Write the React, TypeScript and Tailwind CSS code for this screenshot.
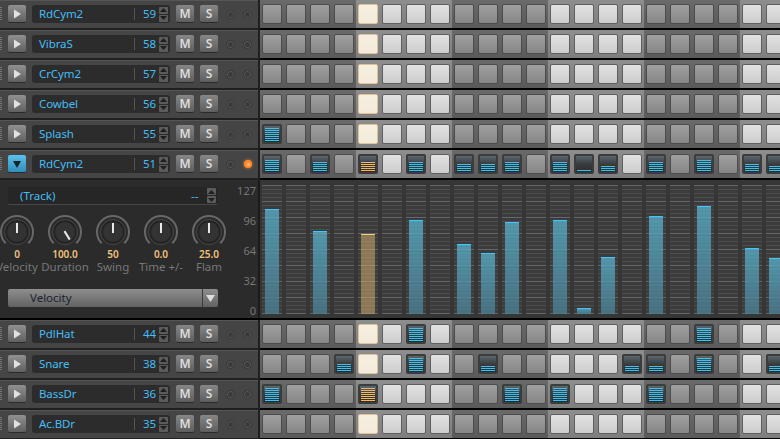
import React from "react";

type Track = { name: string; num: number; steps?: Record<number, number>; orange?: number; open?: boolean };

const top: Track[] = [
  { name: "RdCym2", num: 59 },
  { name: "VibraS", num: 58 },
  { name: "CrCym2", num: 57 },
  { name: "Cowbel", num: 56 },
  { name: "Splash", num: 55, steps: { 0: 7 } },
  {
    name: "RdCym2",
    num: 51,
    open: true,
    orange: 4,
    steps: { 0: 6, 2: 5, 4: 5, 6: 5, 8: 4, 9: 4, 10: 5, 12: 5, 13: 1, 14: 3, 16: 5, 18: 6, 20: 4, 21: 3 },
  },
];
const bottom: Track[] = [
  { name: "PdlHat", num: 44, steps: { 6: 7, 18: 7 } },
  { name: "Snare", num: 38, steps: { 3: 4, 6: 7, 9: 3, 15: 3, 16: 3, 18: 7, 21: 3 } },
  { name: "BassDr", num: 36, orange: 4, steps: { 0: 7, 4: 7, 10: 7, 12: 7, 16: 7 } },
  { name: "Ac.BDr", num: 35 },
];
const cols = Array.from({ length: 22 }, (_, i) => i);
const bars: Record<number, number> = { 0: 105, 2: 83, 4: 80, 6: 94, 8: 70, 9: 61, 10: 92, 12: 94, 13: 6, 14: 57, 16: 98, 18: 108, 20: 66, 21: 56 };

function Spinner() {
  return (
    <div className="flex w-[9px] flex-col gap-[1px]">
      {[0, 1].map((i) => (
        <div key={i} className="flex h-[7px] items-center justify-center rounded-[1px] bg-[#5c5c5c]">
          <svg width="7" height="4" viewBox="0 0 7 4">
            <polygon points={i === 0 ? "3.5,0 7,4 0,4" : "0,0 7,0 3.5,4"} fill="#1f1f1f" />
          </svg>
        </div>
      ))}
    </div>
  );
}

function Led({ on }: { on?: boolean }) {
  return on ? (
    <div className="flex h-[8px] w-[8px] items-center justify-center rounded-full bg-[#ff8a2a] shadow-[0_0_3px_#d9813a]">
      <div className="h-[3px] w-[3px] rounded-full bg-[#ffc070]" />
    </div>
  ) : (
    <div className="flex h-[9px] w-[9px] items-center justify-center rounded-full border border-[#333] bg-[#5a5a5a]">
      <div className="h-[5px] w-[5px] rounded-full bg-[#3a3a3a]" />
    </div>
  );
}

function Strip({ t }: { t: Track }) {
  return (
    <div className="flex h-[28px] w-[258px] items-center bg-[#454545] shadow-[inset_0_1px_0_#555]">
      <div className="h-[14px] w-[2px] bg-[repeating-linear-gradient(180deg,#777_0,#777_1px,transparent_1px,transparent_2px)]" />
      <div
        className={
          t.open
            ? "ml-[6px] flex h-[18px] w-[18px] items-center justify-center rounded-[2px] border-b border-[#2a2a2a] bg-gradient-to-b from-[#5cc1ea] to-[#2d8fbb]"
            : "ml-[6px] flex h-[18px] w-[18px] items-center justify-center rounded-[2px] border-b border-[#2a2a2a] bg-gradient-to-b from-[#909090] to-[#606060]"
        }
      >
        <svg width="10" height="10" viewBox="0 0 10 10">
          {t.open ? <polygon points="1,2 9,2 5,9" fill="#16222a" /> : <polygon points="2,0.5 9,5 2,9.5" fill="#e2e2e2" />}
        </svg>
      </div>
      <div className="ml-[6px] flex h-[18px] w-[138px] items-center rounded-[3px] bg-[#2c2c2c] text-[11.5px] tracking-[-0.1px] text-[#46bdf5]">
        <span className="ml-[7px] w-[95px]">{t.name}</span>
        <div className="h-[12px] w-px bg-[#555]" />
        <span className="ml-[8px] w-[16px]">{t.num}</span>
        <Spinner />
      </div>
      {["M", "S"].map((l) => (
        <div
          key={l}
          className="ml-[6px] flex h-[18px] w-[18px] items-center justify-center rounded-[2px] border-b border-[#2a2a2a] bg-gradient-to-b from-[#868686] to-[#5e5e5e] text-[12px] font-semibold text-[#dcdcdc]"
        >
          {l}
        </div>
      ))}
      <div className="ml-[8px] flex w-[26px] items-center justify-between">
        <Led />
        <Led on={t.open} />
      </div>
    </div>
  );
}

function Pad({ col, level, orange }: { col: number; level?: number; orange?: boolean }) {
  const lightGroup = Math.floor(col / 4) % 2 === 1;
  const accent = col === 4;
  const groupBg = lightGroup
    ? "bg-gradient-to-b from-[#8e8e8e] to-[#7e7e7e]"
    : "bg-gradient-to-b from-[#6a6a6a] to-[#5a5a5a]";
  let pad: React.ReactNode;
  if (level) {
    pad = (
      <div className="flex h-[20px] w-[20px] flex-col justify-end gap-[1px] rounded-[2px] border-2 border-[#3c3c3c] bg-gradient-to-b from-[#5a686f] via-[#383c3f] to-[#2c2c2c] px-[1px] pb-[1px]">
        {Array.from({ length: level }, (_, i) => (
          <div key={i} className={orange ? "h-px w-full bg-[#f5b75c]" : "h-px w-full bg-[#35c3f5]"} />
        ))}
      </div>
    );
  } else {
    const cls = accent
      ? "border-[#e0c498] from-[#f6f0e2] to-[#f3eadb]"
      : lightGroup
        ? "border-[#5f5f5f] from-[#e2e2e2] to-[#cdcdcd]"
        : "border-[#4c4c4c] from-[#a0a0a0] to-[#868686]";
    pad = <div className={"h-[20px] w-[20px] rounded-[2px] border bg-gradient-to-b " + cls} />;
  }
  return <div className={"flex h-[28px] w-[24px] shrink-0 items-center justify-center " + groupBg}>{pad}</div>;
}

function Row({ t }: { t: Track }) {
  return (
    <div className="flex h-[30px] shrink-0 bg-black">
      <div className="h-[30px] w-[260px] shrink-0 bg-[#202020]">
        <Strip t={t} />
      </div>
      <div className="flex h-[28px]">
        {cols.map((c) => (
          <Pad key={c} col={c} level={t.steps?.[c]} orange={t.orange === c} />
        ))}
      </div>
    </div>
  );
}

function Knob({ angle, value, label }: { angle: number; value: string; label: string }) {
  return (
    <div className="flex w-[48px] shrink-0 flex-col items-center">
      <svg width="36" height="36" viewBox="-18 -18 36 36" className="shrink-0">
        <path d="M -11.3 11.3 A 16 16 0 1 1 11.3 11.3" fill="none" stroke="#686868" strokeWidth="2" />
        <circle r="12.5" fill="#232323" stroke="#4a4a4a" strokeWidth="1" />
        <circle r="10" fill="#333" />
        <line x1="0" y1="1" x2="0" y2="-9" stroke="#e8e8e8" strokeWidth="2" transform={`rotate(${angle})`} />
      </svg>
      <div className="mt-[-2px] text-[10px] font-semibold leading-[12px] text-[#f0c27c]">{value}</div>
      <div className="whitespace-nowrap text-[11.5px] leading-[13px] text-[#777]">{label}</div>
    </div>
  );
}

function Panel() {
  return (
    <div className="flex h-[140px] shrink-0 bg-black">
      <div className="flex h-[138px] w-[258px] shrink-0 bg-[#2b2b2b]">
        <div className="flex w-[232px] shrink-0 flex-col overflow-hidden pl-[8px] pt-[7px]">
          <div className="flex h-[18px] w-[210px] shrink-0 items-center rounded-[2px] border-b border-[#484848] bg-[#262626] text-[11.5px] text-[#46bdf5]">
            <span className="ml-[12px] w-[171px]">(Track)</span>
            <span className="w-[16px]">--</span>
            <Spinner />
          </div>
          <div className="-ml-[15px] mt-[9px] flex">
            <Knob angle={0} value="0" label="Velocity" />
            <Knob angle={148} value="100.0" label="Duration" />
            <Knob angle={0} value="50" label="Swing" />
            <Knob angle={0} value="0.0" label="Time +/-" />
            <Knob angle={0} value="25.0" label="Flam" />
          </div>
          <div className="mt-[16px] flex h-[18px] w-[210px] shrink-0 items-center rounded-[2px] bg-gradient-to-b from-[#8e8e8e] to-[#626262] text-[11.5px] text-[#1a2230]">
            <span className="ml-[22px] w-[172px]">Velocity</span>
            <div className="flex h-[18px] w-[16px] items-center justify-center border-l border-[#3a3a3a]">
              <svg width="9" height="7" viewBox="0 0 9 7">
                <polygon points="0,0 9,0 4.5,7" fill="#ddd" />
              </svg>
            </div>
          </div>
        </div>
        <div className="flex flex-1 flex-col items-end gap-[14px] pr-[2px] pt-[3px] text-[11px] leading-[16px] text-[#777]">
          <span>127</span>
          <span>96</span>
          <span>64</span>
          <span>32</span>
          <span>0</span>
        </div>
      </div>
      <div className="h-[138px] w-[2px] shrink-0 bg-[#1a1a1a]" />
      <div className="flex h-[138px] bg-[#363636] pt-[5px]">
        {cols.map((c) => (
          <div
            key={c}
            className="flex h-[129px] w-[24px] shrink-0 flex-col justify-end border-x-2 border-[#363636] bg-[repeating-linear-gradient(180deg,#666666_0,#666666_1px,#3c3c3c_1px,#3c3c3c_4px,#4e4e4e_4px,#4e4e4e_5px,#3c3c3c_5px,#3c3c3c_8px,#4e4e4e_8px,#4e4e4e_9px,#3c3c3c_9px,#3c3c3c_12px,#4e4e4e_12px,#4e4e4e_13px,#3c3c3c_13px,#3c3c3c_16px)]"
          >
            {bars[c] ? (
              <div
                className={
                  c === 4
                    ? "mx-auto w-[14px] border-t border-[#f8c888] bg-[#c0a068]/60"
                    : "mx-auto w-[14px] border-t border-[#3fc8ff] bg-gradient-to-b from-[#58aac4]/80 to-[#4a7d90]/80"
                }
                style={{ height: bars[c] }}
              />
            ) : null}
          </div>
        ))}
      </div>
    </div>
  );
}

export default function App() {
  return (
    <div className="flex h-[439px] w-[780px] flex-col overflow-hidden bg-black font-['Noto_Sans',sans-serif]">
      {top.map((t, i) => (
        <Row key={i} t={t} />
      ))}
      <Panel />
      {bottom.map((t, i) => (
        <Row key={i} t={t} />
      ))}
    </div>
  );
}
